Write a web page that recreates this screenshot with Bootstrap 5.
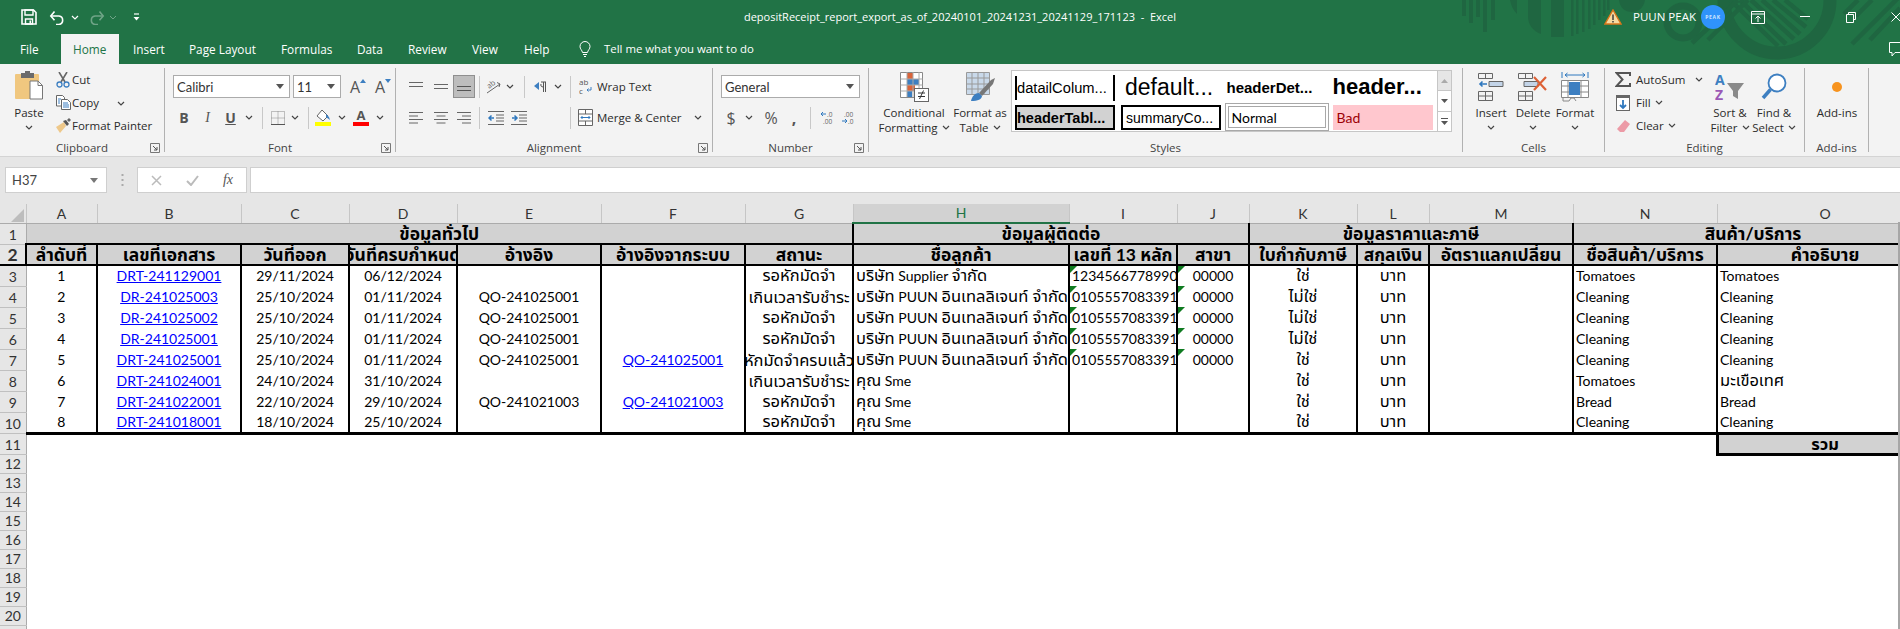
<!DOCTYPE html>
<html lang="th">
<head>
<meta charset="utf-8">
<title>depositReceipt_report_export</title>
<link href="https://cdn.jsdelivr.net/npm/bootstrap@5.3.0/dist/css/bootstrap.min.css" rel="stylesheet">
<style>
html,body{margin:0;width:1900px;height:629px;overflow:hidden;background:#fff}
body{font-family:"Open Sans","Noto Sans",sans-serif;font-size:11.5px;line-height:16px;color:#2b2b2b}
.xl-top{height:64px;background:#217346;position:relative;overflow:hidden;color:#fff}
.xl-deco{position:absolute;left:1440px;top:0;display:block}
.xl-bar1{height:34px;position:relative}
.xl-qat{width:600px;flex:none;display:grid;grid-template-columns:18px 11px 16px 20px 24px 8px 38px;place-items:center;padding-left:20px;justify-content:start}
.xl-title{width:720px;flex:none;text-align:center;font-size:11px;white-space:nowrap}
.xl-right{margin-left:auto;display:grid;grid-template-columns:20px 8px 70px 24px 22px 22px 72px 20px 70px;place-items:center;justify-content:start;width:297px;flex:none;white-space:nowrap}
.xl-user{font-size:11.5px;justify-self:start;padding-left:2px}
.xl-ava{width:24px;height:24px;border-radius:50%;background:#2f93fb;color:#cfe6ff;font-size:5px;letter-spacing:.7px;display:flex;align-items:center;justify-content:center;font-weight:700}
.xl-tabs{position:relative;height:30px;padding-left:6px;list-style:none;margin:0}
.xl-tab{height:30px;line-height:30px;padding-left:14px;font-size:11.8px;color:#fff;white-space:nowrap}
.xl-tab:nth-child(1){width:55px}.xl-tab:nth-child(2){width:58px;padding-left:12px;background:#f3f3f3;color:#217346}
.xl-tab:nth-child(3){width:56px}.xl-tab:nth-child(4){width:92px}.xl-tab:nth-child(5){width:76px}.xl-tab:nth-child(6){width:51px}
.xl-tab:nth-child(7){width:64px}.xl-tab:nth-child(8){width:52px}.xl-tab:nth-child(9){width:62px}
.xl-tab:nth-child(10){padding-left:7px;display:flex;align-items:center;gap:13px;font-size:11.4px}
.xl-bubble{position:absolute;right:-5px;top:7px}
.xl-ribbon{height:93px;background:#f3f3f3;border-bottom:1px solid #d4d4d4;padding-top:4px;display:flex}
.grp{height:84px;border-right:1px solid #b1b1b1;position:relative;flex:none}
.g1{width:165px}.g2{width:231px}.g3{width:317px}.g4{width:156px}.g5{width:594px}.g6{width:142px}.g7{width:200px}.g8{width:64px}
.grp-body{height:72px;display:flex}
.grp-name{height:12px;line-height:16px;text-align:center;color:#444;white-space:nowrap}
.launch{position:absolute;right:4px;bottom:-1px;display:block}
.bigb{display:flex;flex-direction:column;align-items:center;padding-top:4px;flex:none;text-align:center;white-space:nowrap;color:#2b2b2b}
.bigb .bi-box{height:30px;display:flex;align-items:center;justify-content:center;margin-bottom:3px}
.bigb .tx{height:15px;line-height:16px}
.bigb .ch{height:15px;line-height:15px;display:flex;align-items:center;gap:4px}
.b-paste{width:46px;margin-left:6px}
.clip-list{margin-left:2px;white-space:nowrap}
.clip-row{height:23px;display:flex;align-items:center}
.clip-ic{width:18px;display:flex;justify-content:center}
.clip-row .cc2{margin-left:18px}
.stack{padding:7px 0 0 8px}
.combo{height:23px;background:#fff;border:1px solid #ababab;display:flex;align-items:center;justify-content:space-between;padding:0 5px 0 3px;color:#333;font-family:Lato,"Open Sans",sans-serif;font-size:13px}
.cf1{width:117px}.cf2{width:48px}.cf3{width:139px}
.frow1{display:flex;align-items:center;gap:3px}
.grow{width:22px;text-align:center;font-size:16px;color:#555;position:relative}
.frow2,.arow1,.arow2,.nrow2{display:grid;height:23px;place-items:center;justify-content:start}
.frow2{margin-top:8px;grid-template-columns:22px 25px 21px 15px 12px 19px 15px 12px 19px 17px 22px 16px}
.arow1{grid-template-columns:24px 25px 22px 9px 19px 14px 14px 18px 17px 8px 23px auto}
.arow2{margin-top:8px;grid-template-columns:24px 25px 22px 9px 23px 24px 35px 8px 23px auto}
.nrow2{margin-top:8px;grid-template-columns:20px 16px 28px 18px 14px 21px 22px}
.vsep{width:1px;height:22px;background:#c8c8c8}
.bx{font-weight:700;font-family:"Liberation Serif",serif;color:#555;font-size:14px}
.bx-b{font-family:"Open Sans",sans-serif}.bx-i{font-style:italic;font-weight:400}.bx-u{text-decoration:underline;font-family:"Open Sans",sans-serif}
.fc-a{display:flex;flex-direction:column;align-items:center;font-weight:700;font-size:13px;line-height:13px;color:#555}
.fc-a i{display:block;width:16px;height:4px;background:#f00}
.act{width:22px;height:23px;background:#bdbdbd;border:1px solid #8f8f8f;display:flex;align-items:center;justify-content:center}
.txt-r{justify-self:start;white-space:nowrap;display:flex;align-items:center}
.txt-r svg{margin-left:12px}
.sym{font-size:16px;color:#555}
.b-cf{width:78px;margin-left:6px}.b-ft{width:54px}
.gal{width:441px;height:62px;margin:2px 0 0 4px;background:#fff;border:1px solid #c6c6c6;display:flex;flex:none}
.gal-cells{flex:1;display:grid;grid-template-columns:102.5px 100px 104.5px 100px;column-gap:3.5px;grid-template-rows:26px 28px;row-gap:3px;padding:3px 0 0 3px;color:#000;font-family:"Liberation Sans",sans-serif;line-height:normal}
.gc{display:flex;align-items:center;white-space:nowrap;min-width:0}
.gc-1{border-left:2px solid #000;font-size:14.7px;height:24px;margin:2px 2.5px 0 0;position:relative}
.gc-1b{width:2px;height:26px;background:#000;position:absolute;right:0}
.gc-2{font-size:23px;padding-left:4px}
.gc-3{font-weight:700;font-size:15px;padding-left:2px}
.gc-4{font-weight:700;font-size:22px}
.gc-5{border:2px solid #000;background:#d2d2d2;font-weight:700;font-size:14.5px;margin:2px 2.5px 1px 0;padding-left:0;overflow:hidden}
.gc-6{border:2px solid #000;font-size:14px;margin:2px 0 1px;padding-left:3px}
.gc-7{border:4px double #a8a8a8;padding-left:3px;font-size:14px;font-family:Lato,sans-serif}
.gc-8{background:#ffc7ce;color:#9c0006;margin:2px 0 1px;padding-left:4px;font-size:14px;font-family:Lato,sans-serif}
.gal-sc{width:14px;border-left:1px solid #c6c6c6;display:flex;flex-direction:column}
.gal-sc span{flex:1;display:flex;align-items:center;justify-content:center;border-bottom:1px solid #c6c6c6}
.gal-sc span:first-child{background:#e6e6e6}
.gal-sc span:last-child{border-bottom:0}
.b-cell{width:42px}.b-cell:first-child{margin-left:7px}
.ed-list{width:98px;margin-left:5px}
.ed-row{height:23px;display:flex;align-items:center;white-space:nowrap}
.ed-row .ms-auto{margin-right:5px}
.ed-ic{width:26px;display:flex;justify-content:center}
.b-ed{width:44px}
.b-add{width:64px}
.xl-fbar{height:47px;background:#e6e6e6;display:flex;padding:10px 0 0 5px}
.fb-box{height:26px;background:#fff;border:1px solid #cfcfcf;flex:none}
.fb-name{width:102px;display:flex;align-items:center;justify-content:space-between;padding:0 8px 0 6px;font-family:Lato,sans-serif;font-size:13px;color:#444}
.fb-dots{width:30px;display:flex;justify-content:center;align-items:center;height:26px}
.fb-fx{width:110px;display:grid;grid-template-columns:36px 36px 36px;place-items:center}
.fx-t{font-family:"Liberation Serif",serif;font-style:italic;font-size:14px;color:#555}
.fb-inp{margin-left:3px;flex:1;border-right:0}
.xl-sheet{border-collapse:collapse;table-layout:fixed;width:1933px;font-family:Lato,"Noto Sans Thai","Noto Sans Thai Looped",Tahoma,"DejaVu Sans",sans-serif;font-size:14px;color:#000}
.xl-sheet td,.xl-sheet th{padding:0;height:21px;line-height:20px;white-space:nowrap;overflow:hidden;vertical-align:bottom;font-weight:400}
.t{font-size:16.5px;line-height:1}
.cols th{height:19px;background:#e6e6e6;text-align:center;color:#333;border-right:1px solid #c6c6c6;border-bottom:1px solid #ababab;font-size:14px;line-height:18px}
.cols th.sel{background:#d2d2d2;color:#217346;border-bottom:2px solid #217346}
.corn svg{display:block;margin:auto 2px 1px auto}
.rn{background:#e6e6e6!important;text-align:center;color:#333;border-right:1px solid #ababab;border-bottom:1px solid #c0c0c0;font-size:14px;line-height:18px!important}
.r-s td,.r-s th{height:19px;line-height:17px}
.r-11 td{height:20px;line-height:18px}
.xl-sheet .hd1{background:#d2d2d2;font-weight:700;text-align:center;border:1px solid #a0a0a0;border-right:2px solid #000;border-bottom:2px solid #000;font-size:17.5px;line-height:19px}
.hd2 td{background:#d2d2d2;font-weight:700;text-align:center;border-right:2px solid #000;border-bottom:2px solid #000;font-size:17.5px;line-height:19px}
.dt td{border-right:2px solid #000}
.dt.last td{border-bottom:3px solid #000}
.dt td.rn{border-right:1px solid #ababab;border-bottom:1px solid #c0c0c0}
.cc{text-align:center}
.lf{padding-left:2px!important}
.clipc{display:flex;justify-content:center;align-items:center;height:19px;width:100%;overflow:hidden}
.clipc span{flex:none}
.xl-sheet a{color:#0000ff;text-decoration:underline}
.flag{position:relative}
.flag::before{content:"";position:absolute;left:0;top:0;border-top:7px solid #0f7b20;border-right:7px solid transparent}
.xl-sheet .sum{background:#d2d2d2;font-weight:700;text-align:center;border:3px solid #000;border-top:2px solid #000;font-size:16.5px}
.vbar{position:absolute;left:1898px;top:222px;width:2px;height:407px;background:#a6a6a6}
</style>
</head>
<body>
<svg width="0" height="0" class="position-absolute"><defs>
<symbol id="chev" viewBox="0 0 8 5"><path d="M1 1l3 3 3-3" fill="none" stroke="#444" stroke-width="1.2"/></symbol>
<symbol id="lau" viewBox="0 0 10 10"><path d="M.5 .5h9v9h-9z" fill="none" stroke="#777"/><path d="M3 3l4 4M7 4v3H4" fill="none" stroke="#555"/></symbol>
</defs></svg>

<div class="xl-top">
<svg class="xl-deco" width="460" height="64" viewBox="0 0 460 64"><g fill="#1f6641">
<rect x="22" y="0" width="4" height="16"/><rect x="29" y="0" width="4" height="23"/><rect x="36" y="0" width="4" height="17"/><rect x="43" y="0" width="4" height="32"/><rect x="51" y="0" width="4" height="20"/>
<path d="M70 0h7v14C73 10 71 5 70 0zM88 0h13v34C93 31 88 25 88 16zM111 0h13v37h-13zM131 0h2.500v36H131zM136 0h2.500v34H136zM142 0h2.500v32H142zM148 0h2.500v29H148zM153 0h2.500v25H153zM158 0h2.500v20H158zM163 0h2.500v16H163zM167 0h2.500v10H167z"/>
<path d="M179 0c1 8 6 12 13 12s12-5 13-12z"/></g>
<circle cx="243" cy="22" r="16" fill="none" stroke="#1f6641" stroke-width="7"/>
<path d="M284 0a53 53 0 0 0 106 0" fill="none" stroke="#1f6641" stroke-width="13"/>
<g stroke="#1f6641" stroke-width="4.500" fill="none"><path d="M290 0l48 46M300 0l46 44M311 0l43 39M322 0l38 34M333 0l33 27M345 0l23 19"/><path d="M252 43l46-43M268 40l40-40M412 44l48-48M430 40l30-32M404 14l14-14M416 16l16-16"/></g>
</svg>
<div class="xl-bar1 d-flex align-items-center">
<div class="xl-qat">
<svg width="16" height="16" viewBox="0 0 16 16"><path d="M1 1h11.500L15 3.500V15H1z" fill="none" stroke="#fff" stroke-width="1.600"/><path d="M4 1h8v5H4zM4.500 10h7v5h-7z" fill="none" stroke="#fff" stroke-width="1.400"/><rect x="8.500" y="11.500" width="1.500" height="3" fill="#fff"/></svg>
<span></span>
<svg width="16" height="15" viewBox="0 0 16 15"><path d="M2 6h8a4.300 4.300 0 0 1 0 8.500H7" fill="none" stroke="#fff" stroke-width="1.600"/><path d="M5.500 1.500L1.800 6l3.700 4.200" fill="none" stroke="#fff" stroke-width="1.600"/></svg>
<svg width="8" height="5" viewBox="0 0 8 5"><path d="M1 1l3 3 3-3" fill="none" stroke="#fff" stroke-width="1.200"/></svg>
<svg width="16" height="15" viewBox="0 0 16 15" opacity=".35"><path d="M14 6H6a4.300 4.300 0 0 0 0 8.500h3" fill="none" stroke="#fff" stroke-width="1.600"/><path d="M10.500 1.500L14.200 6l-3.700 4.200" fill="none" stroke="#fff" stroke-width="1.600"/></svg>
<svg width="8" height="5" opacity=".35"><path d="M1 1l3 3 3-3" fill="none" stroke="#fff"/></svg>
<svg width="7" height="8" viewBox="0 0 7 8"><path d="M1 1h5" stroke="#fff" stroke-width="1.200"/><path d="M.5 4h6L3.500 7.500z" fill="#fff"/></svg>
</div>
<div class="xl-title">depositReceipt_report_export_as_of_20240101_20241231_20241129_171123&nbsp; -&nbsp; Excel</div>
<div class="xl-right">
<svg width="18" height="16" viewBox="0 0 18 16"><path d="M9 1l8 14H1z" fill="#f7d9a0" stroke="#d9761a" stroke-width="1.400"/><rect x="8.300" y="5.500" width="1.400" height="5.500" fill="#333"/><rect x="8.300" y="12" width="1.400" height="1.500" fill="#333"/></svg>
<span></span>
<span class="xl-user">PUUN PEAK</span>
<span class="xl-ava">PEAK</span>
<span></span>
<svg width="14" height="13" viewBox="0 0 14 13"><path d="M.5 .5h13v12H.5zM.5 3h13" fill="none" stroke="#fff"/><path d="M7 11V5M4.500 7.500L7 5l2.500 2.500" fill="none" stroke="#fff"/></svg>
<svg width="10" height="2"><rect width="10" height="1" fill="#fff"/></svg>
<svg width="10" height="11" viewBox="0 0 10 11"><path d="M.5 2.500h7v8h-7zM2.500 2.500V.5h7v7H7.500" fill="none" stroke="#fff"/></svg>
<svg width="10" height="10" viewBox="0 0 10 10"><path d="M.5 .5l9 9M9.500 .5l-9 9" stroke="#fff"/></svg>
</div>
</div>
<ul class="xl-tabs d-flex">
<li class="xl-tab">File</li><li class="xl-tab">Home</li><li class="xl-tab">Insert</li><li class="xl-tab">Page Layout</li><li class="xl-tab">Formulas</li><li class="xl-tab">Data</li><li class="xl-tab">Review</li><li class="xl-tab">View</li><li class="xl-tab">Help</li>
<li class="xl-tab"><svg width="12" height="17" viewBox="0 0 12 17"><path d="M3.500 11.500C3 9 1 8 1 5.500a5 5 0 0 1 10 0C11 8 9 9 8.500 11.500zM4 13.500h4M5 15.500h2" fill="none" stroke="#fff"/></svg>Tell me what you want to do</li>
<li class="xl-bubble"><svg width="16" height="15" viewBox="0 0 16 15"><path d="M.5 .5h15v10H6l-3 3.500v-3.500H.5z" fill="none" stroke="#fff"/></svg></li>
</ul>
</div>

<div class="xl-ribbon">
<div class="grp g1"><div class="grp-body">
<div class="bigb b-paste"><div class="bi-box"><svg width="28" height="32" viewBox="0 0 28 32"><rect x="0" y="3" width="24" height="25" rx="1" fill="#f0c77f"/><rect x="6" y="2" width="13" height="5" fill="#6b6b6b"/><rect x="10" y="0" width="5" height="3" fill="#6b6b6b"/><path d="M15 10h8l4.500 4.500V28H15z" fill="#fff" stroke="#777"/><path d="M23 10v4.500h4.500" fill="none" stroke="#777"/></svg></div>
<span class="tx">Paste</span><span class="ch"><svg width="8" height="5"><use href="#chev"/></svg></span></div>
<div class="clip-list">
<div class="clip-row"><span class="clip-ic"><svg width="14" height="16" viewBox="0 0 14 16"><path d="M3 0l6 10M11 0L5 10" stroke="#666" stroke-width="1.600" fill="none"/><circle cx="3.500" cy="12.500" r="2.500" fill="none" stroke="#3d7fc1" stroke-width="1.300"/><circle cx="10.500" cy="12.500" r="2.500" fill="none" stroke="#3d7fc1" stroke-width="1.300"/></svg></span>Cut</div>
<div class="clip-row"><span class="clip-ic"><svg width="15" height="15" viewBox="0 0 15 15"><path d="M.5 .5h6l2 2V11H.5z" fill="#fff" stroke="#666"/><path d="M5.500 4.500h6l3 3v7h-9z" fill="#fff" stroke="#666"/><path d="M7 8h5M7 10h6M7 12h6M2 4h3M2 6h2M2 8h2" stroke="#3d7fc1"/></svg></span>Copy<span class="cc2"><svg width="8" height="5"><use href="#chev"/></svg></span></div>
<div class="clip-row"><span class="clip-ic"><svg width="16" height="15" viewBox="0 0 16 15"><path d="M9 4L1 9l4 6 6-7z" fill="#eec88a"/><path d="M8 3l4 5 2-2-3-4z" fill="#555"/><path d="M12 2l2-2 2 2-2 2z" fill="#666"/></svg></span>Format Painter</div>
</div></div><div class="grp-name">Clipboard</div><svg class="launch" width="10" height="10"><use href="#lau"/></svg></div>

<div class="grp g2"><div class="grp-body"><div class="stack">
<div class="frow1"><div class="combo cf1">Calibri<svg width="8" height="5" viewBox="0 0 8 5"><path d="M0 0h8L4 5z" fill="#555"/></svg></div><div class="combo cf2">11<svg width="8" height="5" viewBox="0 0 8 5"><path d="M0 0h8L4 5z" fill="#555"/></svg></div>
<span class="grow">A<svg class="position-absolute" width="6" height="4" viewBox="0 0 6 4"><path d="M0 4h6L3 0z" fill="#3d7fc1"/></svg></span><span class="grow">A<svg class="position-absolute" width="6" height="4" viewBox="0 0 6 4"><path d="M0 0h6L3 4z" fill="#3d7fc1"/></svg></span></div>
<div class="frow2"><span class="bx bx-b">B</span><span class="bx bx-i">I</span><span class="bx bx-u">U</span><svg width="8" height="5"><use href="#chev"/></svg><span class="vsep"></span>
<svg width="14" height="14" viewBox="0 0 14 14"><path d="M.5 .5h13v13H.5zM7 .5v13M.5 7h13" fill="none" stroke="#888" stroke-dasharray="1 1"/><path d="M0 13.500h14" stroke="#555"/></svg><svg width="8" height="5"><use href="#chev"/></svg><span class="vsep"></span>
<svg width="17" height="17" viewBox="0 0 17 17"><path d="M7 1l6 6-5 5-6-5z" fill="#fff" stroke="#666"/><path d="M11 5l3 3 1 3-4-3z" fill="#3d7fc1"/><rect y="13" width="16" height="4" fill="#ff0"/></svg><svg width="8" height="5"><use href="#chev"/></svg>
<span class="fc-a">A<i></i></span><svg width="8" height="5"><use href="#chev"/></svg></div>
</div></div><div class="grp-name">Font</div><svg class="launch" width="10" height="10"><use href="#lau"/></svg></div>

<div class="grp g3"><div class="grp-body"><div class="stack">
<div class="arow1">
<svg width="14" height="9" viewBox="0 0 14 9"><path d="M0 .5h14M0 4.500h14" stroke="#666"/></svg>
<svg width="14" height="9" viewBox="0 0 14 9"><path d="M0 2.500h14M0 6.500h14" stroke="#666"/></svg>
<span class="act"><svg width="14" height="9" viewBox="0 0 14 9"><path d="M0 4.500h14M0 8.500h14" stroke="#555"/></svg></span><span class="vsep"></span>
<svg width="15" height="15" viewBox="0 0 15 15"><path d="M1 14L14 5M11 3.500l3 1.500-1 3" stroke="#666" fill="none"/><text x="1" y="8" font-size="7.500" fill="#666" transform="rotate(-40 5 6)">ab</text></svg><svg width="8" height="5"><use href="#chev"/></svg><span class="vsep"></span>
<svg width="14" height="12" viewBox="0 0 14 12"><path d="M6 1L1 5l5 4z" fill="#3d7fc1"/><path d="M8 1h5M10.500 1v10M12.500 1v10M10.500 6C8 6 7.500 4.500 8 3" stroke="#555" fill="none"/></svg><svg width="8" height="5"><use href="#chev"/></svg><span class="vsep"></span>
<svg width="14" height="17" viewBox="0 0 14 17"><text x="0" y="7" font-size="8" fill="#555">ab</text><text x="0" y="16" font-size="8" fill="#555">c</text><path d="M12 9v3H8M9.500 10.500L8 12l1.500 1.500" stroke="#3d7fc1" fill="none"/></svg>
<span class="txt-r">Wrap Text</span></div>
<div class="arow2">
<svg width="14" height="12" viewBox="0 0 14 12"><path d="M0 .5h14M0 4h9M0 7.500h14M0 11h9" stroke="#666"/></svg>
<svg width="14" height="12" viewBox="0 0 14 12"><path d="M0 .5h14M2.500 4h9M0 7.500h14M2.500 11h9" stroke="#666"/></svg>
<svg width="14" height="12" viewBox="0 0 14 12"><path d="M0 .5h14M5 4h9M0 7.500h14M5 11h9" stroke="#666"/></svg><span class="vsep"></span>
<svg width="16" height="14" viewBox="0 0 16 14"><path d="M0 .5h16M8 4h8M8 7h8M8 10h8M0 13.500h16" stroke="#666"/><path d="M6 7H1M3.500 4.500L1 7l2.500 2.500" stroke="#2f78be" stroke-width="1.500" fill="none"/></svg>
<svg width="16" height="14" viewBox="0 0 16 14"><path d="M0 .5h16M8 4h8M8 7h8M8 10h8M0 13.500h16" stroke="#666"/><path d="M1 7h5M3.500 4.500L6 7 3.500 9.500" stroke="#2f78be" stroke-width="1.500" fill="none"/></svg>
<span></span><span class="vsep"></span>
<svg width="15" height="17" viewBox="0 0 15 17"><path d="M.5 .5h14v16H.5zM.5 5h14M.5 12h14M7.500 .5V5M7.500 12v4.500" fill="#fff" stroke="#666"/><path d="M3 8.500h9M4.500 7L3 8.500 4.500 10M10.500 7L12 8.500 10.500 10" stroke="#2f78be" fill="none"/></svg>
<span class="txt-r">Merge &amp; Center<svg width="8" height="5"><use href="#chev"/></svg></span></div>
</div></div><div class="grp-name">Alignment</div><svg class="launch" width="10" height="10"><use href="#lau"/></svg></div>

<div class="grp g4"><div class="grp-body"><div class="stack">
<div class="combo cf3">General<svg width="8" height="5" viewBox="0 0 8 5"><path d="M0 0h8L4 5z" fill="#555"/></svg></div>
<div class="nrow2"><span class="sym">$</span><svg width="8" height="5"><use href="#chev"/></svg><span class="sym">%</span><span class="sym fw-bold">,</span><span class="vsep"></span>
<svg width="16" height="14" viewBox="0 0 16 14"><text x="7" y="6" font-size="6.500" fill="#666">.0</text><text x="3" y="13" font-size="6.500" fill="#666">.00</text><path d="M6 3H1M3 1L1 3l2 2" stroke="#2f78be" fill="none"/></svg>
<svg width="16" height="14" viewBox="0 0 16 14"><text x="3" y="6" font-size="6.500" fill="#666">.00</text><text x="7" y="13" font-size="6.500" fill="#666">.0</text><path d="M1 10h5M4 8l2 2-2 2" stroke="#2f78be" fill="none"/></svg></div>
</div></div><div class="grp-name">Number</div><svg class="launch" width="10" height="10"><use href="#lau"/></svg></div>

<div class="grp g5"><div class="grp-body">
<div class="bigb b-cf"><div class="bi-box"><svg width="29" height="30" viewBox="0 0 29 30"><path d="M.5 .5h22v25H.5z" fill="#fff" stroke="#888"/><rect x="7" y="1" width="6" height="6" fill="#d9643a"/><rect x="7" y="7" width="12" height="6" fill="#3d7fc1"/><rect x="7" y="13" width="8" height="6" fill="#d9643a"/><rect x="7" y="19" width="5" height="6" fill="#3d7fc1"/><path d="M.5 7h22M.5 13h22M.5 19h22M7 0v25M13 0v25M19 0v25" stroke="#aaa" fill="none"/><rect x="14.500" y="16.500" width="14" height="13" fill="#fff" stroke="#666"/><path d="M18 21h7M18 24.500h7M19.500 27l4-8.500" stroke="#333" fill="none"/></svg></div>
<span class="tx">Conditional</span><span class="ch">Formatting <svg width="8" height="5"><use href="#chev"/></svg></span></div>
<div class="bigb b-ft"><div class="bi-box"><svg width="29" height="30" viewBox="0 0 29 30"><path d="M.5 .5h23v22H.5z" fill="#c9d9ea" stroke="#999"/><path d="M.5 6h23M.5 12h23M.5 17h23M6 0v23M12 0v23M18 0v23" stroke="#999" fill="none"/><path d="M13 21l12-13 4-2-2 6-11 12z" fill="#777"/><path d="M5 29c1-5 4-8 8-8l3 3c0 3-4 5-11 5z" fill="#3d7fc1"/></svg></div>
<span class="tx">Format as</span><span class="ch">Table <svg width="8" height="5"><use href="#chev"/></svg></span></div>
<div class="gal"><div class="gal-cells">
<div class="gc gc-1">datailColum...<span class="gc-1b"></span></div><div class="gc gc-2">default...</div><div class="gc gc-3">headerDet...</div><div class="gc gc-4">header...</div>
<div class="gc gc-5">headerTabl...</div><div class="gc gc-6">summaryCo...</div><div class="gc gc-7">Normal</div><div class="gc gc-8">Bad</div>
</div><div class="gal-sc"><span><svg width="7" height="4" viewBox="0 0 7 4"><path d="M0 4h7L3.500 0z" fill="#aaa"/></svg></span><span><svg width="7" height="4" viewBox="0 0 7 4"><path d="M0 0h7L3.500 4z" fill="#555"/></svg></span><span><svg width="7" height="7" viewBox="0 0 7 7"><path d="M0 .5h7" stroke="#555"/><path d="M0 3h7L3.500 7z" fill="#555"/></svg></span></div></div>
</div><div class="grp-name">Styles</div></div>

<div class="grp g6"><div class="grp-body">
<div class="bigb b-cell"><div class="bi-box"><svg width="26" height="28" viewBox="0 0 26 28"><path d="M.5 .5h14v5H.5zM7.500 .5v5M.5 18.500h14v9H.5zM.5 23h14M7.500 18.500v9" fill="none" stroke="#666"/><path d="M11 8.500h14v5H11z" fill="#c3d4e8" stroke="#666"/><path d="M9 11H2M4.500 8.500L2 11l2.500 2.500" stroke="#2f78be" stroke-width="1.600" fill="none"/></svg></div><span class="tx">Insert</span><span class="ch"><svg width="8" height="5"><use href="#chev"/></svg></span></div>
<div class="bigb b-cell"><div class="bi-box"><svg width="30" height="28" viewBox="0 0 30 28"><path d="M.5 .5h14v5H.5zM7.500 .5v5M.5 18.500h14v9H.5zM.5 23h14M7.500 18.500v9" fill="none" stroke="#666"/><path d="M6 8.500h14v5H6z" fill="#c3d4e8" stroke="#666"/><path d="M16 4l12 13M28 4L16 17" stroke="#dd6136" stroke-width="2.200"/></svg></div><span class="tx">Delete</span><span class="ch"><svg width="8" height="5"><use href="#chev"/></svg></span></div>
<div class="bigb b-cell"><div class="bi-box"><svg width="28" height="30" viewBox="0 0 28 30"><path d="M4 3h20M6.500 1L4 3l2.500 2M21.500 1L24 3l-2.500 2M1 0v6M27 0v6" fill="none" stroke="#2f78be"/><path d="M.5 8.500h27v17h-27zM7 8.500v17M20 8.500v17M.5 14h27M.5 20h27" fill="#fff" stroke="#888"/><rect x="8" y="10" width="11" height="13" fill="#3d7fc1"/><path d="M2 26v3h6l2-3h3l2 3" fill="none" stroke="#888"/></svg></div><span class="tx">Format</span><span class="ch"><svg width="8" height="5"><use href="#chev"/></svg></span></div>
</div><div class="grp-name">Cells</div></div>

<div class="grp g7"><div class="grp-body">
<div class="ed-list">
<div class="ed-row"><span class="ed-ic"><svg width="16" height="15" viewBox="0 0 16 15"><path d="M15 4V1H1.500l6 6.500-6 6.500H15v-3" fill="none" stroke="#555" stroke-width="2"/></svg></span>AutoSum<svg class="ms-auto" width="8" height="5"><use href="#chev"/></svg></div>
<div class="ed-row"><span class="ed-ic"><svg width="14" height="16" viewBox="0 0 14 16"><rect x=".5" y=".5" width="13" height="15" fill="#fff" stroke="#666"/><rect width="14" height="3" fill="#666"/><path d="M7 5v8M4 10l3 3 3-3" stroke="#2f78be" stroke-width="1.800" fill="none"/></svg></span>Fill <svg class="ms-1" width="8" height="5"><use href="#chev"/></svg></div>
<div class="ed-row"><span class="ed-ic"><svg width="15" height="14" viewBox="0 0 15 14"><path d="M9 1l5 4-6 8H4L1 10z" fill="#ec9aa6"/></svg></span>Clear <svg class="ms-1" width="8" height="5"><use href="#chev"/></svg></div>
</div>
<div class="bigb b-ed"><div class="bi-box"><svg width="30" height="28" viewBox="0 0 30 28"><text x="0" y="12" font-size="14" font-weight="700" fill="#3d7fc1">A</text><text x="0" y="27" font-size="14" font-weight="700" fill="#9b59b6">Z</text><path d="M12 10h17l-6 8v8l-5-3v-5z" fill="#8a8a8a"/></svg></div><span class="tx">Sort &amp;</span><span class="ch">Filter <svg width="8" height="5"><use href="#chev"/></svg></span></div>
<div class="bigb b-ed"><div class="bi-box"><svg width="26" height="28" viewBox="0 0 26 28"><circle cx="16" cy="10" r="8.500" fill="#fff" stroke="#3d7fc1" stroke-width="1.800"/><path d="M9.500 16.500L2 25" stroke="#3d7fc1" stroke-width="3.500"/></svg></div><span class="tx">Find &amp;</span><span class="ch">Select <svg width="8" height="5"><use href="#chev"/></svg></span></div>
</div><div class="grp-name">Editing</div></div>

<div class="grp g8"><div class="grp-body"><div class="bigb b-add"><div class="bi-box"><svg width="14" height="14" viewBox="0 0 14 14"><circle cx="7" cy="7" r="5" fill="#f7931e"/></svg></div><span class="tx">Add-ins</span></div></div><div class="grp-name">Add-ins</div></div>
</div>

<div class="xl-fbar">
<div class="fb-box fb-name">H37<svg width="8" height="5" viewBox="0 0 8 5"><path d="M0 0h8L4 5z" fill="#777"/></svg></div>
<div class="fb-dots"><svg width="3" height="12" viewBox="0 0 3 12"><path d="M1.500 0v2M1.500 5v2M1.500 10v2" stroke="#aaa" stroke-width="2"/></svg></div>
<div class="fb-box fb-fx"><svg width="11" height="11" viewBox="0 0 11 11"><path d="M1 1l9 9M10 1l-9 9" stroke="#bbb" stroke-width="1.500"/></svg><svg width="13" height="11" viewBox="0 0 13 11"><path d="M1 6l4 4 7-9" stroke="#bbb" stroke-width="2" fill="none"/></svg><span class="fx-t">fx</span></div>
<div class="fb-box fb-inp"></div>
</div>

<table class="xl-sheet">
<colgroup><col width="26"><col width="71"><col width="144"><col width="108"><col width="108"><col width="144"><col width="144"><col width="108"><col width="216"><col width="108"><col width="72"><col width="108"><col width="72"><col width="144"><col width="144"><col width="216"></colgroup>
<tr class="cols"><th class="corn"><svg width="14" height="14" viewBox="0 0 14 14"><path d="M14 1v13H1z" fill="#bdbdbd"/></svg></th><th>A</th><th>B</th><th>C</th><th>D</th><th>E</th><th>F</th><th>G</th><th class="sel">H</th><th>I</th><th>J</th><th>K</th><th>L</th><th>M</th><th>N</th><th>O</th></tr>
<tr><td class="rn">1</td><td class="hd1" colspan="7">ข้อมูลทั่วไป</td><td class="hd1" colspan="3">ข้อมูลผู้ติดต่อ</td><td class="hd1" colspan="3">ข้อมูลราคาและภาษี</td><td class="hd1" colspan="2">สินค้า/บริการ</td></tr>
<tr class="hd2"><td class="rn">2</td><td>ลำดับที่</td><td>เลขที่เอกสาร</td><td>วันที่ออก</td><td><div class="clipc"><span>วันที่ครบกำหนด</span></div></td><td>อ้างอิง</td><td>อ้างอิงจากระบบ</td><td>สถานะ</td><td>ชื่อลูกค้า</td><td>เลขที่ 13 หลัก</td><td>สาขา</td><td>ใบกำกับภาษี</td><td>สกุลเงิน</td><td>อัตราแลกเปลี่ยน</td><td>ชื่อสินค้า/บริการ</td><td>คำอธิบาย</td></tr>
<tr class="dt"><td class="rn">3</td><td class="cc">1</td><td class="cc"><a href="#">DRT-241129001</a></td><td class="cc">29/11/2024</td><td class="cc">06/12/2024</td><td class="cc"></td><td class="cc"></td><td class="cc"><span class="t">รอหักมัดจำ</span></td><td class="lf"><span class="t">บริษัท</span> Supplier <span class="t">จำกัด</span></td><td class="flag lf">1234566778990</td><td class="flag cc">00000</td><td class="cc"><span class="t">ใช่</span></td><td class="cc"><span class="t">บาท</span></td><td></td><td class="lf">Tomatoes</td><td class="lf">Tomatoes</td></tr>
<tr class="dt"><td class="rn">4</td><td class="cc">2</td><td class="cc"><a href="#">DR-241025003</a></td><td class="cc">25/10/2024</td><td class="cc">01/11/2024</td><td class="cc">QO-241025001</td><td class="cc"></td><td><div class="clipc"><span class="t">เกินเวลารับชำระ</span></div></td><td class="lf"><span class="t">บริษัท</span> PUUN <span class="t">อินเทลลิเจนท์ จำกัด</span></td><td class="flag lf">0105557083391</td><td class="flag cc">00000</td><td class="cc"><span class="t">ไม่ใช่</span></td><td class="cc"><span class="t">บาท</span></td><td></td><td class="lf">Cleaning</td><td class="lf">Cleaning</td></tr>
<tr class="dt"><td class="rn">5</td><td class="cc">3</td><td class="cc"><a href="#">DR-241025002</a></td><td class="cc">25/10/2024</td><td class="cc">01/11/2024</td><td class="cc">QO-241025001</td><td class="cc"></td><td class="cc"><span class="t">รอหักมัดจำ</span></td><td class="lf"><span class="t">บริษัท</span> PUUN <span class="t">อินเทลลิเจนท์ จำกัด</span></td><td class="flag lf">0105557083391</td><td class="flag cc">00000</td><td class="cc"><span class="t">ไม่ใช่</span></td><td class="cc"><span class="t">บาท</span></td><td></td><td class="lf">Cleaning</td><td class="lf">Cleaning</td></tr>
<tr class="dt"><td class="rn">6</td><td class="cc">4</td><td class="cc"><a href="#">DR-241025001</a></td><td class="cc">25/10/2024</td><td class="cc">01/11/2024</td><td class="cc">QO-241025001</td><td class="cc"></td><td class="cc"><span class="t">รอหักมัดจำ</span></td><td class="lf"><span class="t">บริษัท</span> PUUN <span class="t">อินเทลลิเจนท์ จำกัด</span></td><td class="flag lf">0105557083391</td><td class="flag cc">00000</td><td class="cc"><span class="t">ไม่ใช่</span></td><td class="cc"><span class="t">บาท</span></td><td></td><td class="lf">Cleaning</td><td class="lf">Cleaning</td></tr>
<tr class="dt"><td class="rn">7</td><td class="cc">5</td><td class="cc"><a href="#">DRT-241025001</a></td><td class="cc">25/10/2024</td><td class="cc">01/11/2024</td><td class="cc">QO-241025001</td><td class="cc"><a href="#">QO-241025001</a></td><td><div class="clipc"><span class="t">หักมัดจำครบแล้ว</span></div></td><td class="lf"><span class="t">บริษัท</span> PUUN <span class="t">อินเทลลิเจนท์ จำกัด</span></td><td class="flag lf">0105557083391</td><td class="flag cc">00000</td><td class="cc"><span class="t">ใช่</span></td><td class="cc"><span class="t">บาท</span></td><td></td><td class="lf">Cleaning</td><td class="lf">Cleaning</td></tr>
<tr class="dt"><td class="rn">8</td><td class="cc">6</td><td class="cc"><a href="#">DRT-241024001</a></td><td class="cc">24/10/2024</td><td class="cc">31/10/2024</td><td class="cc"></td><td class="cc"></td><td><div class="clipc"><span class="t">เกินเวลารับชำระ</span></div></td><td class="lf"><span class="t">คุณ</span> Sme</td><td></td><td></td><td class="cc"><span class="t">ใช่</span></td><td class="cc"><span class="t">บาท</span></td><td></td><td class="lf">Tomatoes</td><td class="lf"><span class="t">มะเขือเทศ</span></td></tr>
<tr class="dt"><td class="rn">9</td><td class="cc">7</td><td class="cc"><a href="#">DRT-241022001</a></td><td class="cc">22/10/2024</td><td class="cc">29/10/2024</td><td class="cc">QO-241021003</td><td class="cc"><a href="#">QO-241021003</a></td><td class="cc"><span class="t">รอหักมัดจำ</span></td><td class="lf"><span class="t">คุณ</span> Sme</td><td></td><td></td><td class="cc"><span class="t">ใช่</span></td><td class="cc"><span class="t">บาท</span></td><td></td><td class="lf">Bread</td><td class="lf">Bread</td></tr>
<tr class="dt last"><td class="rn">10</td><td class="cc">8</td><td class="cc"><a href="#">DRT-241018001</a></td><td class="cc">18/10/2024</td><td class="cc">25/10/2024</td><td class="cc"></td><td class="cc"></td><td class="cc"><span class="t">รอหักมัดจำ</span></td><td class="lf"><span class="t">คุณ</span> Sme</td><td></td><td></td><td class="cc"><span class="t">ใช่</span></td><td class="cc"><span class="t">บาท</span></td><td></td><td class="lf">Cleaning</td><td class="lf">Cleaning</td></tr>
<tr class="r-11"><td class="rn">11</td><td colspan="14"></td><td class="sum">รวม</td></tr>
<tr class="r-s"><td class="rn">12</td><td colspan="15"></td></tr>
<tr class="r-s"><td class="rn">13</td><td colspan="15"></td></tr>
<tr class="r-s"><td class="rn">14</td><td colspan="15"></td></tr>
<tr class="r-s"><td class="rn">15</td><td colspan="15"></td></tr>
<tr class="r-s"><td class="rn">16</td><td colspan="15"></td></tr>
<tr class="r-s"><td class="rn">17</td><td colspan="15"></td></tr>
<tr class="r-s"><td class="rn">18</td><td colspan="15"></td></tr>
<tr class="r-s"><td class="rn">19</td><td colspan="15"></td></tr>
<tr class="r-s"><td class="rn">20</td><td colspan="15"></td></tr>
<tr class="r-s"><td class="rn">&nbsp;</td><td colspan="15"></td></tr>
</table>
<div class="vbar"></div>
<script src="https://cdn.jsdelivr.net/npm/bootstrap@5.3.0/dist/js/bootstrap.bundle.min.js"></script>
</body>
</html>
